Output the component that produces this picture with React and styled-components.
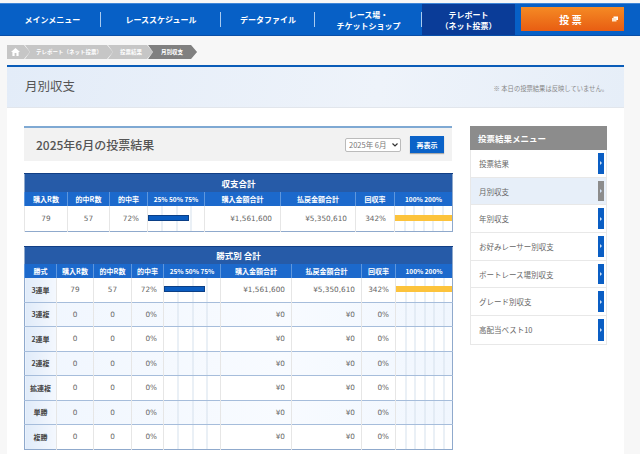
import styled, { createGlobalStyle } from "styled-components";

const GlobalStyle = createGlobalStyle`
    html, body {
        margin: 0;
        padding: 0;
        background-color: #f7f7f7;
        overflow: hidden;
    }
    * {
        box-sizing: border-box;
    }
    body {
        font-family: "Noto Sans CJK JP", "Noto Sans", sans-serif;
        color: #555;
    }
`

const Page = styled.div`
    width: 640px;
    height: 454px;
    overflow: hidden;
    padding-top: 3px;
    background-color: #f7f7f7;
`

const NavBar = styled.nav`
    display: flex;
    height: 33px;
    background-color: #0760c6;
    border-top: 1px solid #3f86d8;
    border-bottom: 1px solid #0a4fa8;
`

const NavItem = styled.a`
    position: relative;
    width: ${p => p.$width}px;
    padding-left: ${p => p.$indent || 0}px;
    display: flex;
    align-items: center;
    justify-content: center;
    text-align: center;
    font-size: 8px;
    line-height: 11px;
    font-weight: 700;
    color: #fff;
    background-color: ${p => p.$active ? '#0a3c98' : 'transparent'};

    &::after {
        content: ${p => p.$sep ? "''" : 'none'};
        position: absolute;
        right: 0;
        top: 8px;
        height: 15px;
        width: 1px;
        background-color: #a9cbf0;
    }
`

const VoteButton = styled.a`
    position: relative;
    width: 103px;
    height: 24px;
    margin: 3px 0 0 6px;
    display: flex;
    align-items: center;
    justify-content: center;
    padding-right: 4px;
    font-size: 10px;
    font-weight: 700;
    color: #fff;
    background: linear-gradient(#f58a24, #e85d12);
`

const VoteIcon = styled.svg`
    position: absolute;
    right: 6px;
    top: 9px;
`

const Crumbs = styled.div`
    display: flex;
    height: 14px;
    margin: 9px 0 6px 7px;
`

const Crumb = styled.span`
    height: 14px;
    padding: ${p => p.$pad};
    margin-right: -5px;
    display: flex;
    align-items: center;
    font-size: 5.5px;
    font-weight: 700;
    color: #fff;
    background-color: ${p => p.$current ? '#808080' : '#c6c6c6'};
    clip-path: polygon(0 0, calc(100% - 6px) 0, 100% 50%, calc(100% - 6px) 100%, 0 100%, 5px 50%);
`

const HomeCrumb = styled(Crumb)`
    clip-path: polygon(0 0, calc(100% - 6px) 0, 100% 50%, calc(100% - 6px) 100%, 0 100%);
`

const Panel = styled.main`
    width: 617px;
    height: 390px;
    margin-left: 7px;
    background-color: #fff;
`

const TitleBar = styled.header`
    height: 43px;
    display: flex;
    align-items: center;
    justify-content: space-between;
    padding: 0 16px 0 18px;
    border-top: 2px solid #0a5cb8;
    border-bottom: 1px solid #e2e6ec;
    background: linear-gradient(100deg, #e3ecf8, #eef3fa 60%, #e6eef8);
`

const PageTitle = styled.h1`
    margin: 0 0 3px;
    font-size: 12.5px;
    font-weight: 400;
    color: #555;
`

const Note = styled.span`
    margin-top: 3px;
    font-size: 6.3px;
    color: #888;
`

const Columns = styled.div`
    display: flex;
    align-items: flex-start;
    gap: 18px;
    padding: 18px 0 0 17px;
`

const MainCol = styled.section`
    width: 428px;
`

const ResultHead = styled.div`
    height: 35px;
    display: flex;
    align-items: center;
    padding: 0 8px 0 12px;
    margin-bottom: 12px;
    border-top: 2px solid #7fa9d3;
    background-color: #f2f2f2;
`

const ResultTitle = styled.h2`
    flex: 1;
    margin: 0;
    font-size: 12px;
    font-weight: 500;
    color: #555;
`

const SelectBox = styled.div`
    position: relative;
    width: 56px;
    height: 14px;
    margin-right: 9px;
`

const MonthSelect = styled.select`
    appearance: none;
    display: block;
    width: 100%;
    height: 100%;
    padding: 0 0 0 3px;
    font-family: "Noto Sans CJK JP", sans-serif;
    font-size: 7.5px;
    color: #777;
    background-color: #fff;
    border: 1px solid #bbb;
    border-radius: 2px;
`

const SelectArrow = styled.svg`
    position: absolute;
    right: 3px;
    top: 5px;
    pointer-events: none;
`

const ShowButton = styled.button`
    width: 34px;
    height: 17px;
    padding: 0;
    border: none;
    font-family: inherit;
    font-size: 7px;
    font-weight: 700;
    color: #fff;
    background-color: #0a62c8;
    box-shadow: 0 1px 1px #aaa;
`

const Table = styled.table`
    width: 428px;
    table-layout: fixed;
    border-collapse: collapse;
    margin-bottom: 14px;
    border-left: 1px solid #8fa9cc;
    border-right: 1px solid #8fa9cc;
    border-bottom: 1px solid #8fa9cc;
`

const TableTitle = styled.th`
    height: ${p => p.$height}px;
    padding: 0;
    font-size: 8.5px;
    font-weight: 700;
    color: #fff;
    background-color: #265ba8;
    border-top: 1px solid #123f85;
`

const HeadCell = styled.th`
    height: 14px;
    padding: 0;
    font-size: ${p => p.$gauge ? '6.5px' : '7px'};
    font-weight: 700;
    color: #fff;
    background-color: #1c69cc;
    border-left: 1px solid #5f97dd;
    white-space: nowrap;
`

const BodyRow = styled.tr`
    background: ${p => p.$tint ? 'linear-gradient(90deg, #f0f6fe, #f8fbff 60%, #f0f6fe)' : '#fff'};
    border-top: ${p => p.$line ? '1px solid #a6bddb' : 'none'};
`

const RowName = styled.td`
    height: ${p => p.$height}px;
    padding: 0;
    text-align: center;
    font-size: 7px;
    font-weight: 700;
    color: #444;
    background: linear-gradient(90deg, #e0ebf9, #f4f8fe);
`

const Cell = styled.td`
    height: ${p => p.$height}px;
    padding: ${p => p.$pad ? `0 ${p.$pad}px 0 0` : '0'};
    text-align: ${p => p.$pad ? 'right' : 'center'};
    font-family: "DejaVu Sans", sans-serif;
    font-size: 7.3px;
    color: #666;
    border-left: 1px solid #e6e6e6;
`

const GaugeCell = styled.td`
    padding: 0;
    border-left: 1px solid #e6e6e6;
    background-image: repeating-linear-gradient(90deg, transparent 0, transparent ${p => p.$step - 1}px, #d5e0ec ${p => p.$step - 1}px, #d5e0ec ${p => p.$step}px);
`

const GaugeBar = styled.div`
    height: 6px;
    width: ${p => p.$width}px;
    max-width: 100%;
    margin-bottom: 1px;
    background-color: ${p => p.$color};
    border: ${p => p.$edge ? `1px solid ${p.$edge}` : 'none'};
`

const SideMenu = styled.aside`
    width: 137px;
    border: 1px solid #e8e8e8;
    border-top: none;
`

const SideTitle = styled.div`
    height: 24px;
    margin: 0 -1px;
    display: flex;
    align-items: center;
    padding-left: 8px;
    font-size: 8.5px;
    font-weight: 700;
    color: #fff;
    background-color: #8c8c8c;
`

const SideItem = styled.a`
    position: relative;
    height: 27.7px;
    display: flex;
    align-items: center;
    padding-left: 8px;
    font-size: 7.5px;
    color: #666;
    background-color: ${p => p.$active ? '#e7eff9' : '#fff'};
    border-bottom: 1px solid #e8e8e8;

    &:last-child {
        border-bottom: none;
    }
`

const SideTab = styled.span`
    position: absolute;
    right: 2px;
    top: 3px;
    bottom: 3px;
    width: 6px;
    display: flex;
    align-items: center;
    justify-content: center;
    background-color: ${p => p.$active ? '#8c8c8c' : '#0a5ec4'};

    &::after {
        content: '';
        border-left: 2px solid #cfe0f5;
        border-top: 2px solid transparent;
        border-bottom: 2px solid transparent;
    }
`

const summaryCols = [43, 42, 38, 57, 76, 75, 39, 58]
const detailCols = [32, 37, 38, 32, 57, 71, 70, 34, 57]

const betTypes = [
    { name: '3連単', r: 79, hit: 57, rate: '72%', buy: '¥1,561,600', pay: '¥5,350,610', back: '342%', bar: 41, payBar: 58 },
    { name: '3連複', r: 0, hit: 0, rate: '0%', buy: '¥0', pay: '¥0', back: '0%' },
    { name: '2連単', r: 0, hit: 0, rate: '0%', buy: '¥0', pay: '¥0', back: '0%' },
    { name: '2連複', r: 0, hit: 0, rate: '0%', buy: '¥0', pay: '¥0', back: '0%' },
    { name: '拡連複', r: 0, hit: 0, rate: '0%', buy: '¥0', pay: '¥0', back: '0%' },
    { name: '単勝', r: 0, hit: 0, rate: '0%', buy: '¥0', pay: '¥0', back: '0%' },
    { name: '複勝', r: 0, hit: 0, rate: '0%', buy: '¥0', pay: '¥0', back: '0%' },
]

const menu = [
    { label: '投票結果' },
    { label: '月別収支', active: true },
    { label: '年別収支' },
    { label: 'お好みレーサー別収支' },
    { label: 'ボートレース場別収支' },
    { label: 'グレード別収支' },
    { label: '高配当ベスト10' },
]

const Rate = ({ row, height, pad }) => (
    <>
        <Cell $height={height}>{row.r}</Cell>
        <Cell>{row.hit}</Cell>
        <Cell $pad={pad}>{row.rate}</Cell>
        <GaugeCell $step={14.3}>
            {row.bar && <GaugeBar $width={row.bar} $color="#0a5cc0" $edge="#0b3f86" />}
        </GaugeCell>
        <Cell $pad={pad}>{row.buy}</Cell>
        <Cell $pad={pad}>{row.pay}</Cell>
        <Cell $pad={pad}>{row.back}</Cell>
        <GaugeCell $step={9.6}>
            {row.payBar && <GaugeBar $width={row.payBar} $color="#fcc33c" />}
        </GaugeCell>
    </>
)

const App = () => {
    return (
        <Page>
            <GlobalStyle />
            <NavBar>
                <NavItem $width={101} $indent={4} $sep>メインメニュー</NavItem>
                <NavItem $width={120} $sep>レーススケジュール</NavItem>
                <NavItem $width={94} $sep>データファイル</NavItem>
                <NavItem $width={107} $sep>レース場・<br />チケットショップ</NavItem>
                <NavItem $width={93} $active>テレポート<br />（ネット投票）</NavItem>
                <VoteButton>
                    投 票
                    <VoteIcon width="6" height="6" viewBox="0 0 6 6">
                        <rect x="1.5" y="0.5" width="4.5" height="3.5" fill="#fff" />
                        <rect x="0" y="2" width="4.5" height="3.5" fill="#fde3c8" />
                    </VoteIcon>
                </VoteButton>
            </NavBar>

            <Crumbs>
                <HomeCrumb $pad="0 10px 0 4px">
                    <svg width="9" height="8" viewBox="0 0 9 8">
                        <path d="M4.5 0 L9 4 H7.6 V8 H5.4 V5 H3.6 V8 H1.4 V4 H0 Z" fill="#fff" />
                    </svg>
                </HomeCrumb>
                <Crumb $pad="0 11px 0 11px">テレポート（ネット投票）</Crumb>
                <Crumb $pad="0 11px 0 12px">投票結果</Crumb>
                <Crumb $pad="0 14px 0 13px" $current>月別収支</Crumb>
            </Crumbs>

            <Panel>
                <TitleBar>
                    <PageTitle>月別収支</PageTitle>
                    <Note>※ 本日の投票結果は反映していません。</Note>
                </TitleBar>
                <Columns>
                    <MainCol>
                        <ResultHead>
                            <ResultTitle>2025年6月の投票結果</ResultTitle>
                            <SelectBox>
                                <MonthSelect defaultValue="6">
                                    <option value="6">2025年 6月</option>
                                </MonthSelect>
                                <SelectArrow width="6" height="4" viewBox="0 0 6 4">
                                    <path d="M0.5 0.5 L3 3 L5.5 0.5" fill="none" stroke="#333" strokeWidth="1.2" />
                                </SelectArrow>
                            </SelectBox>
                            <ShowButton>再表示</ShowButton>
                        </ResultHead>

                        <Table>
                            <colgroup>
                                {summaryCols.map((w, i) => <col key={i} width={w} />)}
                            </colgroup>
                            <thead>
                                <tr><TableTitle colSpan={8} $height={18}>収支合計</TableTitle></tr>
                                <tr>
                                    <HeadCell>購入R数</HeadCell>
                                    <HeadCell>的中R数</HeadCell>
                                    <HeadCell>的中率</HeadCell>
                                    <HeadCell $gauge>25% 50% 75%</HeadCell>
                                    <HeadCell>購入金額合計</HeadCell>
                                    <HeadCell>払戻金額合計</HeadCell>
                                    <HeadCell>回収率</HeadCell>
                                    <HeadCell $gauge>100% 200%</HeadCell>
                                </tr>
                            </thead>
                            <tbody>
                                <BodyRow>
                                    <Rate row={betTypes[0]} height={26} pad={8} />
                                </BodyRow>
                            </tbody>
                        </Table>

                        <Table>
                            <colgroup>
                                {detailCols.map((w, i) => <col key={i} width={w} />)}
                            </colgroup>
                            <thead>
                                <tr><TableTitle colSpan={9} $height={17}>勝式別 合計</TableTitle></tr>
                                <tr>
                                    <HeadCell>勝式</HeadCell>
                                    <HeadCell>購入R数</HeadCell>
                                    <HeadCell>的中R数</HeadCell>
                                    <HeadCell>的中率</HeadCell>
                                    <HeadCell $gauge>25% 50% 75%</HeadCell>
                                    <HeadCell>購入金額合計</HeadCell>
                                    <HeadCell>払戻金額合計</HeadCell>
                                    <HeadCell>回収率</HeadCell>
                                    <HeadCell $gauge>100% 200%</HeadCell>
                                </tr>
                            </thead>
                            <tbody>
                                {betTypes.map((row, i) => (
                                    <BodyRow key={row.name} $tint={i % 2 === 1} $line={i > 0}>
                                        <RowName $height={24.5}>{row.name}</RowName>
                                        <Rate row={row} height={24.5} pad={6} />
                                    </BodyRow>
                                ))}
                            </tbody>
                        </Table>
                    </MainCol>

                    <SideMenu>
                        <SideTitle>投票結果メニュー</SideTitle>
                        {menu.map(item => (
                            <SideItem key={item.label} $active={item.active}>
                                {item.label}
                                <SideTab $active={item.active} />
                            </SideItem>
                        ))}
                    </SideMenu>
                </Columns>
            </Panel>
        </Page>
    )
}

export default App;
